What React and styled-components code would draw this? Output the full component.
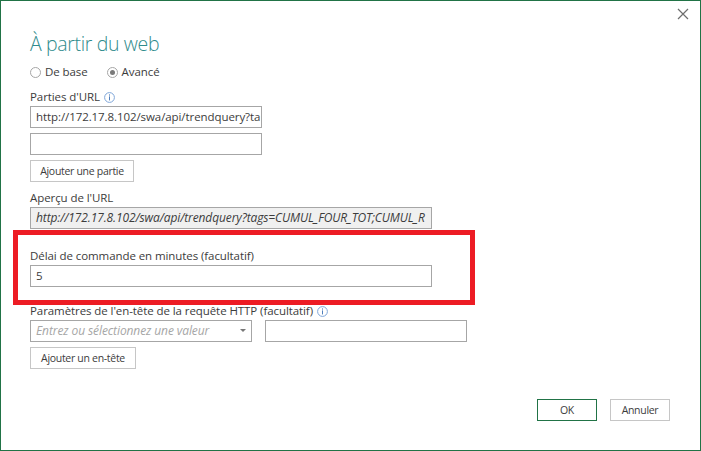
import styled, { createGlobalStyle } from "styled-components";

const GlobalStyle = createGlobalStyle`
  html, body {
    margin: 0;
    padding: 0;
    background: #fff;
  }
  * {
    box-sizing: border-box;
  }
`;

function InfoIcon() {
  return (
    <InfoSvg width="11" height="11" viewBox="0 0 11 11">
      <circle cx="5.5" cy="5.5" r="4.9" fill="none" stroke="#7fa6d8" strokeWidth="1" />
      <rect x="5" y="2.4" width="1" height="1.2" fill="#4f7fbd" />
      <rect x="5" y="4.4" width="1" height="4" fill="#4f7fbd" />
    </InfoSvg>
  );
}

function Radio({ checked, children }) {
  return (
    <RadioItem>
      <RadioCircle>{checked && <RadioDot />}</RadioCircle>
      {children}
    </RadioItem>
  );
}

function App() {
  return (
    <Dialog>
      <GlobalStyle />
      <CloseRow>
        <svg width="12" height="12" viewBox="0 0 12 12">
          <path d="M1 1 L11 11 M11 1 L1 11" stroke="#6e6e6e" strokeWidth="1.2" fill="none" />
        </svg>
      </CloseRow>
      <Title>À partir du web</Title>
      <RadioRow>
        <Radio>De base</Radio>
        <Radio checked>Avancé</Radio>
      </RadioRow>
      <Label $top={8}>Parties d'URL<InfoIcon /></Label>
      <Input $width={232}>http://172.17.8.102/swa/api/trendquery?ta</Input>
      <Input $width={232} $top={5} />
      <Button $width={104} $top={5}>Ajouter une partie</Button>
      <Label $top={7}>Aperçu de l'URL</Label>
      <Input $width={402} $readonly>http://172.17.8.102/swa/api/trendquery?tags=CUMUL_FOUR_TOT;CUMUL_R</Input>
      <Highlighted>
        <RedBox />
        <Label $top={0}>Délai de commande en minutes (facultatif)</Label>
        <Input $width={402}>5</Input>
      </Highlighted>
      <Label $top={0}>Paramètres de l'en-tête de la requête HTTP (facultatif)<InfoIcon /></Label>
      <HeaderRow>
        <Select>
          Entrez ou sélectionnez une valeur
          <Caret />
        </Select>
        <Input $width={202} />
      </HeaderRow>
      <Button $width={106} $top={5}>Ajouter un en-tête</Button>
      <Footer>
        <FooterButton $primary>OK</FooterButton>
        <FooterButton>Annuler</FooterButton>
      </Footer>
    </Dialog>
  );
}

export default App;

const Dialog = styled.div`
  width: 701px;
  height: 451px;
  border: 1px solid #217346;
  padding: 0 29px;
  display: flex;
  flex-direction: column;
  align-items: flex-start;
  font-family: "Open Sans", "Noto Sans", sans-serif;
  font-size: 11.5px;
  letter-spacing: -0.08px;
  color: #3c3c3c;
  overflow: hidden;
`;

const CloseRow = styled.div`
  align-self: stretch;
  height: 31px;
  margin-right: -18px;
  padding-top: 7px;
  display: flex;
  justify-content: flex-end;
  align-items: flex-start;
`;

const Title = styled.div`
  font-size: 19.5px;
  font-weight: 300;
  line-height: 24px;
  letter-spacing: -0.35px;
  color: #2f8b8c;
`;

const RadioRow = styled.div`
  display: flex;
  gap: 19px;
  margin-top: 8px;
  height: 16px;
`;

const RadioItem = styled.div`
  display: flex;
  align-items: center;
  gap: 4px;
  line-height: 16px;
`;

const RadioCircle = styled.span`
  width: 11px;
  height: 11px;
  border: 1px solid #a6a6a6;
  border-radius: 50%;
  display: flex;
  align-items: center;
  justify-content: center;
`;

const RadioDot = styled.span`
  width: 5px;
  height: 5px;
  border-radius: 50%;
  background: #7a7a7a;
`;

const Label = styled.div`
  margin-top: ${(p) => p.$top}px;
  height: 18px;
  line-height: 18px;
  display: flex;
  align-items: center;
  gap: 4px;
  white-space: pre;
`;

const InfoSvg = styled.svg`
  flex: none;
`;

const Input = styled.div`
  width: ${(p) => p.$width}px;
  height: 22px;
  margin-top: ${(p) => p.$top || 0}px;
  border: 1px solid #a6a6a6;
  padding: 0 5px;
  line-height: 20px;
  white-space: nowrap;
  overflow: hidden;
  background: ${(p) => (p.$readonly ? "#f0f0f0" : "#fff")};
  font-style: ${(p) => (p.$readonly ? "italic" : "normal")};
  font-size: ${(p) => (p.$readonly ? "12px" : "inherit")};
  letter-spacing: ${(p) => (p.$readonly ? "-0.12px" : "inherit")};
`;

const Button = styled.div`
  width: ${(p) => p.$width}px;
  height: 22px;
  margin-top: ${(p) => p.$top}px;
  border: 1px solid #c6c6c6;
  font-size: 10.5px;
  letter-spacing: -0.3px;
  line-height: 20px;
  text-align: center;
`;

const Highlighted = styled.div`
  position: relative;
  align-self: stretch;
  padding-top: 17px;
  height: 72px;
  margin-top: 1px;
`;

const RedBox = styled.div`
  position: absolute;
  left: -17px;
  top: 0;
  width: 462px;
  height: 75px;
  border: 5px solid #ed1c24;
`;

const HeaderRow = styled.div`
  display: flex;
  gap: 13px;
`;

const Select = styled.div`
  position: relative;
  width: 222px;
  height: 22px;
  border: 1px solid #a6a6a6;
  padding: 0 5px;
  line-height: 20px;
  font-style: italic;
  font-size: 12px;
  letter-spacing: -0.1px;
  color: #a6a6a6;
`;

const Caret = styled.span`
  position: absolute;
  right: 5px;
  top: 8px;
  border-left: 3px solid transparent;
  border-right: 3px solid transparent;
  border-top: 3px solid #777;
`;

const Footer = styled.div`
  margin-top: auto;
  margin-bottom: 29px;
  align-self: flex-end;
  margin-right: 1px;
  display: flex;
  gap: 13px;
`;

const FooterButton = styled.div`
  width: 60px;
  height: 22px;
  font-size: 10.5px;
  letter-spacing: -0.3px;
  line-height: 20px;
  text-align: center;
  border: 1px solid ${(p) => (p.$primary ? "#217346" : "#c6c6c6")};
`;
